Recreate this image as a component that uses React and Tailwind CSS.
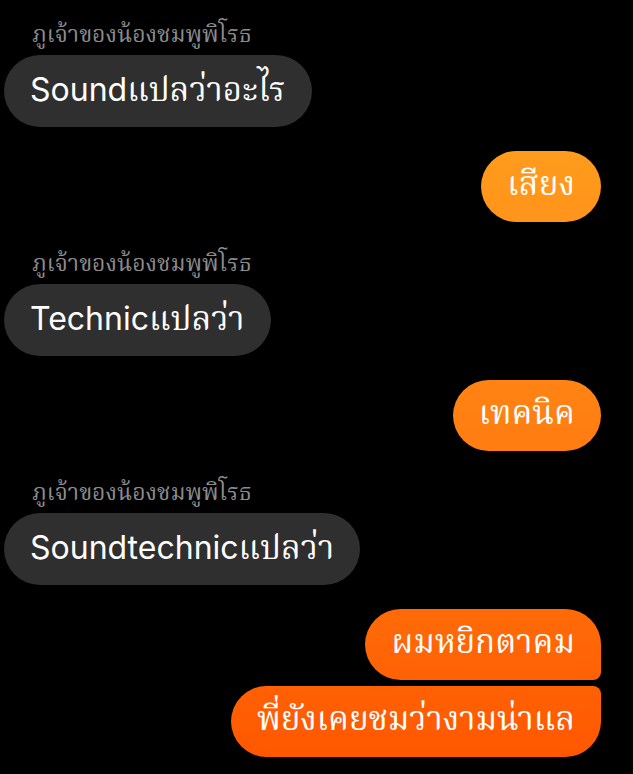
const LATIN = "font-['Inter','Liberation_Sans',sans-serif]";
const THAI = "font-['Noto_Serif_Thai',serif]";

const SENDER = 'ภูเจ้าของน้องชมพูพิโรธ';

const MESSAGES = [
  { id: 1, from: 'them', text: 'Soundแปลว่าอะไร' },
  { id: 2, from: 'me', text: 'เสียง' },
  { id: 3, from: 'them', text: 'Technicแปลว่า' },
  { id: 4, from: 'me', text: 'เทคนิค' },
  { id: 5, from: 'them', text: 'Soundtechnicแปลว่า' },
  { id: 6, from: 'me', text: 'ผมหยิกตาคม', group: 'top' },
  { id: 7, from: 'me', text: 'พี่ยังเคยชมว่างามน่าแล', group: 'bottom' },
];

// split mixed text so latin and thai runs can take their own font
function Runs({ text }) {
  const parts = text.match(/[A-Za-z]+|[^A-Za-z]+/g) || [];
  return parts.map((p, i) =>
    /[A-Za-z]/.test(p) ? (
      <span key={i} className={`${LATIN} text-[32px]`}>
        {p}
      </span>
    ) : (
      <span key={i} className={`${THAI} text-[33px]`}>
        {p}
      </span>
    )
  );
}

function Bubble({ msg }) {
  if (msg.from === 'them') {
    return (
      <div className="flex flex-col items-start mt-[29px] first:mt-0">
        <p className={`${THAI} pl-[28px] h-[28px] leading-[28px] text-[23px] text-[#8c8c8c]`}>{SENDER}</p>
        <div className="mt-[5px] h-[72px] flex items-center rounded-full bg-[#2f2f2f] pl-[26px] pr-[26px] leading-none text-white whitespace-nowrap">
          <p>
            <Runs text={msg.text} />
          </p>
        </div>
      </div>
    );
  }
  const radius =
    msg.group === 'top'
      ? 'rounded-[36px] rounded-br-[8px]'
      : msg.group === 'bottom'
        ? 'rounded-[36px] rounded-tr-[8px]'
        : 'rounded-full';
  const gap = msg.group === 'bottom' ? 'mt-[6px]' : 'mt-6';
  return (
    <div className={`flex justify-end ${gap}`}>
      <div
        className={`h-[71px] flex items-center px-[26px] leading-none text-white whitespace-nowrap bg-fixed bg-linear-to-b from-[#ffaa22] to-[#ff5500] ${radius}`}
      >
        <p>
          <Runs text={msg.text} />
        </p>
      </div>
    </div>
  );
}

export default function App() {
  return (
    <div className="min-h-[774px] bg-black pt-[22px] pl-[4px] pr-[32px]">
      {MESSAGES.map((m) => (
        <Bubble key={m.id} msg={m} />
      ))}
    </div>
  );
}
